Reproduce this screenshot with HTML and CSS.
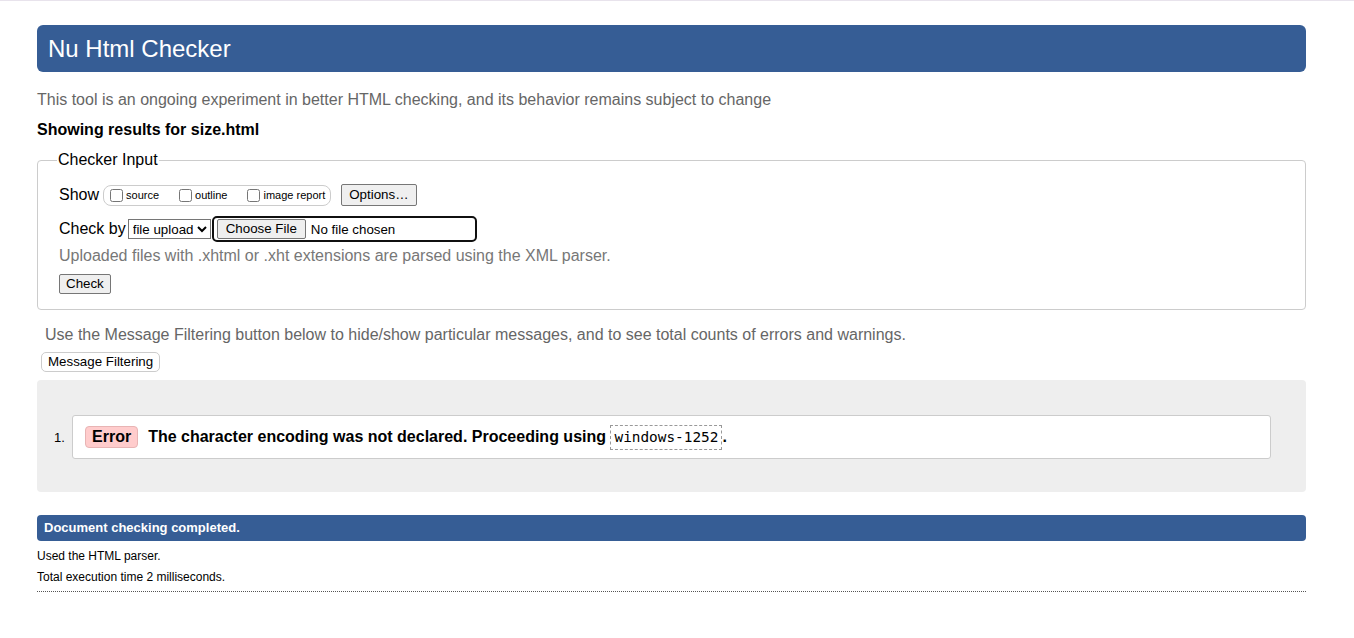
FILE: index.html
```html
<!DOCTYPE html>
<html lang="en">
<head>
<meta charset="utf-8">
<title>Nu Html Checker</title>
<link rel="stylesheet" href="styles.css">
</head>
<body>
<div class="topline"></div>
<main class="page">
  <h1 class="title">Nu Html Checker</h1>
  <p class="intro">This tool is an ongoing experiment in better HTML checking, and its behavior remains subject to change</p>
  <p class="showing">Showing results for size.html</p>

  <fieldset class="checker">
    <legend class="legend">Checker Input</legend>
    <div class="row row-show">
      <span class="row-label">Show</span>
      <span class="show-group">
        <label class="opt"><input type="checkbox" class="cb">source</label>
        <label class="opt"><input type="checkbox" class="cb">outline</label>
        <label class="opt"><input type="checkbox" class="cb">image report</label>
      </span>
      <button class="btn btn-options" type="button">Options…</button>
    </div>
    <div class="row row-check">
      <span class="row-label">Check by</span>
      <select class="sel"><option>file upload</option></select>
      <span class="file-wrap"><span class="btn btn-file">Choose File</span><span class="file-name">No file chosen</span></span>
    </div>
    <p class="hint">Uploaded files with .xhtml or .xht extensions are parsed using the XML parser.</p>
    <button class="btn btn-check" type="button">Check</button>
  </fieldset>

  <p class="filter-note">Use the Message Filtering button below to hide/show particular messages, and to see total counts of errors and warnings.</p>
  <button class="btn btn-filter" type="button">Message Filtering</button>

  <section class="results">
    <ol class="msgs">
      <li class="msg">
        <span class="num">1.</span>
        <div class="msg-box">
          <span class="badge">Error</span>
          <span class="msg-text">The character encoding was not declared. Proceeding using <code class="code">windows-1252</code>.</span>
        </div>
      </li>
    </ol>
  </section>

  <h2 class="done">Document checking completed.</h2>
  <p class="small">Used the HTML parser.</p>
  <p class="small">Total execution time 2 milliseconds.</p>
  <hr class="dotted">
</main>
</body>
</html>
```

FILE: styles.css
```css
html, body {
  margin: 0;
  padding: 0;
  background: #fff;
}
body {
  font-family: "Liberation Sans", Arial, sans-serif;
  color: #000;
}
.topline {
  height: 1px;
  background: #e8e3ec;
}
.page {
  padding: 24px 48px 0 37px;
}
.title {
  margin: 0;
  background: #365d95;
  color: #fff;
  font-weight: normal;
  font-size: 24px;
  line-height: 27px;
  padding: 10px 11px 10px 11px;
  border-radius: 6px;
}
.intro {
  margin: 19px 0 0;
  font-size: 16px;
  line-height: 18px;
  color: #666;
}
.showing {
  margin: 12px 0 0;
  font-size: 16px;
  line-height: 18px;
  font-weight: bold;
}
.checker {
  margin: 12px 0 0;
  padding: 15px 20px 15px 21px;
  border: 1px solid #ccc;
  border-radius: 4px;
  min-inline-size: 0;
}
.legend {
  padding: 0 1px;
  margin-left: -2px;
  font-size: 16px;
  line-height: 18px;
}
.row {
  display: flex;
  align-items: center;
}
.row-label {
  font-size: 16px;
  line-height: 18px;
  margin-right: 4px;
}
.row-show {
  height: 22px;
}
.show-group {
  display: inline-flex;
  align-items: center;
  border: 1px solid #ccc;
  border-radius: 8px;
  height: 19px;
  padding: 0 5px 0 2px;
  gap: 16px;
}
.opt {
  display: inline-flex;
  align-items: center;
  font-size: 11px;
}
.cb {
  margin: 0 3px 0 4px;
  width: 13px;
  height: 13px;
}
.btn {
  font-family: "Liberation Sans", Arial, sans-serif;
  font-size: 13.33px;
  background: #efefef;
  border: 1px solid #767676;
  border-radius: 2px;
  color: #000;
  padding: 1px 6px;
  line-height: 16px;
}
.btn-options {
  margin-left: 10px;
  padding: 2px 7px;
}
.row-check {
  margin-top: 12px;
  height: 22px;
}
.sel {
  font-family: "Liberation Sans", Arial, sans-serif;
  font-size: 13.33px;
  height: 20px;
  margin-left: -2px;
  border: 1px solid #767676;
  border-radius: 0;
  background: #fff;
  color: #000;
  padding: 0;
}
.file-wrap {
  display: inline-flex;
  align-items: center;
  margin-left: 1px;
  width: 258px;
  height: 22px;
  border: 2px solid #101010;
  border-radius: 5px;
  padding-left: 3px;
}
.btn-file {
  display: inline-block;
  padding: 1px 8px;
}
.file-name {
  font-size: 13.33px;
  margin-left: 5px;
}
.hint {
  margin: 7px 0 0;
  font-size: 16px;
  line-height: 18px;
  color: #777;
}
.btn-check {
  margin-top: 9px;
  padding: 1px 6px;
}
.filter-note {
  margin: 16px 0 0 8px;
  font-size: 16px;
  line-height: 18px;
  color: #666;
}
.btn-filter {
  display: block;
  margin: 8px 0 0 4px;
  background: #fff;
  border: 1px solid #ccc;
  border-radius: 5px;
  padding: 1px 6px;
}
.results {
  margin-top: 8px;
  background: #eee;
  border-radius: 4px;
  padding: 35px 35px 33px 17px;
}
.msgs {
  list-style: none;
  margin: 0;
  padding: 0;
}
.msg {
  display: flex;
  align-items: center;
}
.num {
  width: 18px;
  font-size: 13px;
  margin-right: 0;
}
.msg-box {
  flex: 1;
  display: flex;
  align-items: center;
  background: #fff;
  border: 1px solid #ccc;
  border-radius: 3px;
  height: 42px;
  padding-left: 12px;
}
.badge {
  background: #fcc;
  border: 1px solid #e8b4b4;
  border-radius: 4px;
  font-weight: bold;
  font-size: 16px;
  line-height: 18px;
  padding: 1px 6px;
}
.msg-text {
  margin-left: 10px;
  font-weight: bold;
  font-size: 16px;
  line-height: 18px;
}
.code {
  font-family: "DejaVu Sans Mono", monospace;
  font-weight: normal;
  font-size: 14.4px;
  border: 1px dashed #999;
  padding: 3px 3px 4px;
}
.done {
  margin: 23px 0 0;
  background: #365d95;
  color: #fff;
  font-size: 13px;
  line-height: 16px;
  padding: 5px 7px;
  border-radius: 4px;
}
.small {
  margin: 8px 0 0;
  font-size: 12px;
  line-height: 15px;
}
.small + .small {
  margin-top: 6px;
}
.dotted {
  margin: 6px 0 0;
  border: 0;
  border-top: 1px dotted #555;
  height: 0;
}
```
